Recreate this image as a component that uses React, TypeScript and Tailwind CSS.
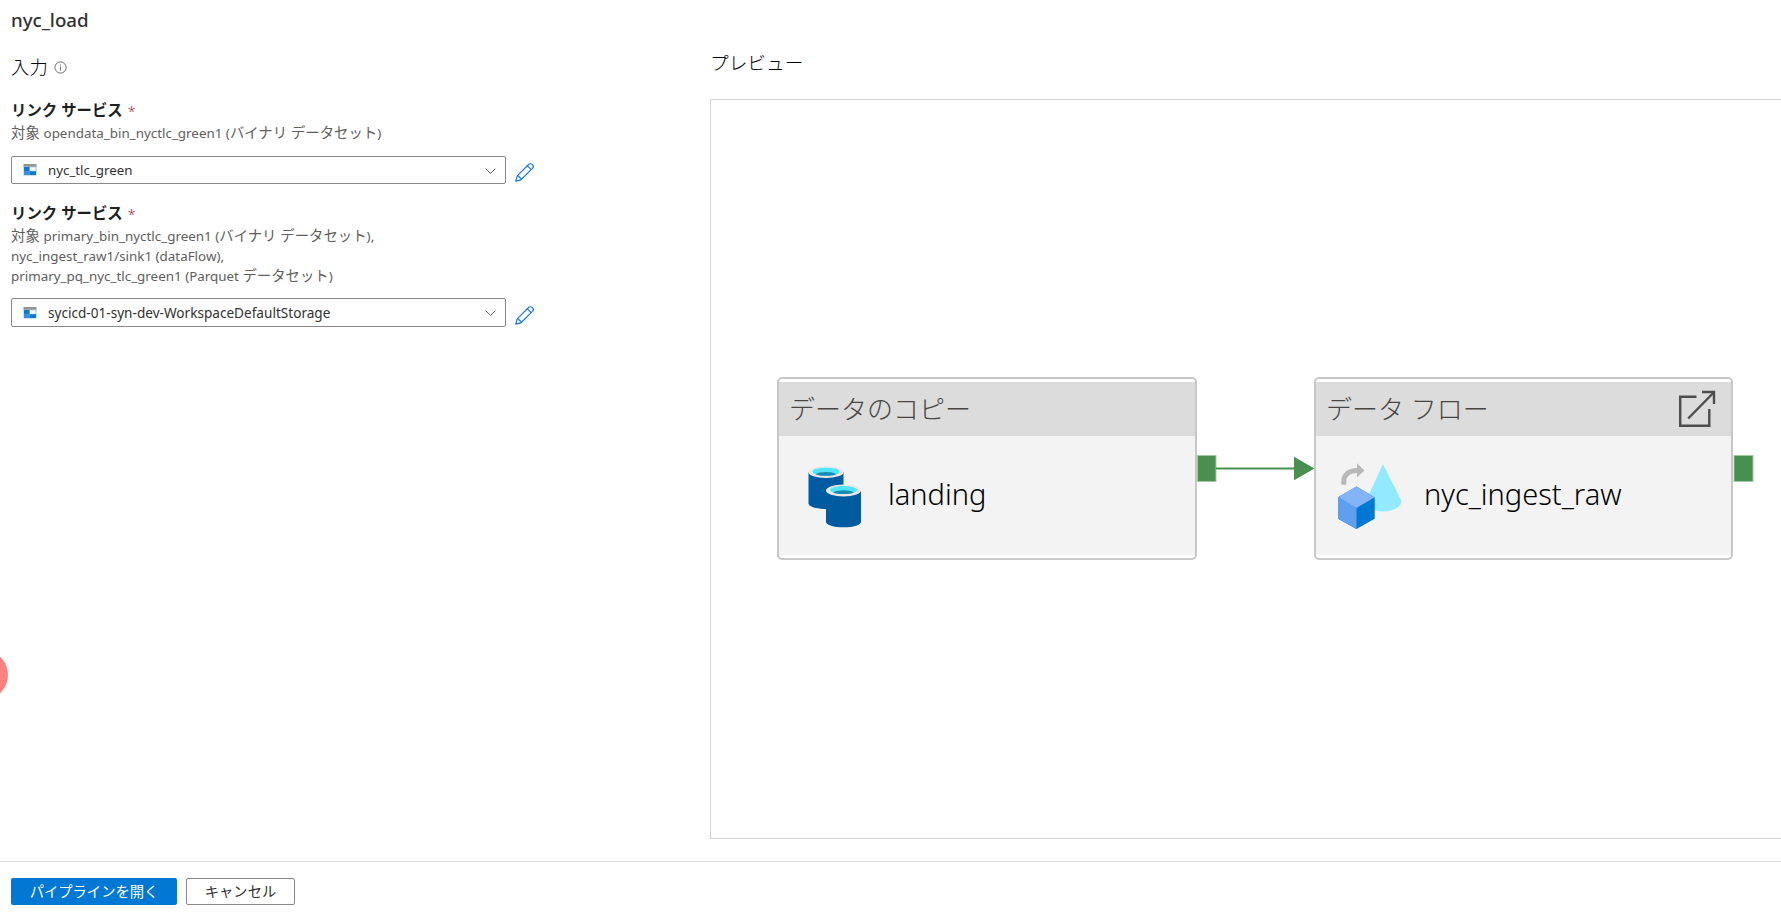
import { ReactNode } from "react";

function InfoIcon() {
  return (
    <svg width="13" height="13" viewBox="0 0 13 13" fill="none" className="block">
      <circle cx="6.5" cy="6.5" r="5.6" stroke="#605e5c" strokeWidth="0.9" />
      <path d="M6.5 5.6V9.6" stroke="#605e5c" strokeWidth="0.9" />
      <path d="M6.5 3.5V4.5" stroke="#605e5c" strokeWidth="1" />
    </svg>
  );
}

function ServiceIcon() {
  return (
    <svg width="14" height="12" viewBox="0 0 14 12" className="block shrink-0">
      <rect x="0.5" y="0" width="13" height="3" fill="#949494" />
      <rect x="0.5" y="2.6" width="13" height="8.9" fill="#a9c6e0" />
      <rect x="1" y="3" width="5.4" height="4.2" fill="#0f78d0" />
      <rect x="1" y="7.2" width="5.6" height="3.8" fill="#2f8fe0" />
      <rect x="6.6" y="7.2" width="6.4" height="3.8" fill="#0f78d0" />
      <rect x="7" y="3.4" width="5.4" height="3.4" fill="#ffffff" />
    </svg>
  );
}

function Chevron() {
  return (
    <svg width="11" height="7" viewBox="0 0 11 7" fill="none" className="relative top-px block shrink-0">
      <path d="M0.7 0.7L5.5 5.4L10.3 0.7" stroke="#605e5c" strokeWidth="1" />
    </svg>
  );
}

function Pencil() {
  return (
    <svg width="19" height="19" viewBox="0 0 19 19" fill="none" stroke="#1a7ad9" strokeWidth="1.2" strokeLinejoin="round" className="block shrink-0">
      <path d="M0.8 18.2L2.2 12.9L13.6 1.5C14.6 0.5 16.4 0.5 17.4 1.6C18.5 2.6 18.5 4.3 17.5 5.4L6 16.8Z" />
      <path d="M12.3 2.8L16.2 6.7M2.2 12.9C3.9 12.9 4.4 13.2 4.3 14.7C5.8 14.6 6.1 15.1 6 16.8M1.2 16.7L2.3 17.8" />
    </svg>
  );
}

function CopyIcon() {
  return (
    <svg width="54" height="62" viewBox="0 0 54 62" className="block">
      <path d="M0.5 6V37.5C0.5 40.5 8.3 43 18 43S35.5 40.5 35.5 37.5V6Z" fill="#005ba1" />
      <ellipse cx="18" cy="6.2" rx="17.5" ry="5.9" fill="#e8e8e8" />
      <ellipse cx="18" cy="5.7" rx="13.5" ry="4" fill="#50e6ff" />
      <path d="M7.5 8.2C10 6.6 14 5.9 18 5.9S26 6.6 28.5 8.2C26 9.3 22.5 9.8 18 9.8S10 9.3 7.5 8.2Z" fill="#198ab3" />
      <path d="M18 24.5V56C18 59 25.8 61.3 35.5 61.3S53 59 53 56V24.5Z" fill="#005ba1" />
      <ellipse cx="35.5" cy="24.5" rx="17.5" ry="5.9" fill="#e8e8e8" />
      <ellipse cx="35.5" cy="24" rx="13.5" ry="4" fill="#50e6ff" />
      <path d="M25 26.5C27.5 24.9 31.5 24.2 35.5 24.2S43.5 24.9 46 26.5C43.5 27.6 40 28.1 35.5 28.1S27.5 27.6 25 26.5Z" fill="#198ab3" />
    </svg>
  );
}

function FlowIcon() {
  return (
    <svg width="66" height="68" viewBox="0 0 66 68" className="block">
      <path d="M46 2L64.3 38.5C65 45 56 49.5 46 49.5C37 49.5 28 46 29 39Z" fill="#93e9ff" />
      <path d="M4.3 22.7V19.5C4.3 11 11 6 20 6V1.3L27.4 8.6L20 15.5V11C13.5 11 9.3 14 9.3 19.5V22.7Z" fill="#b8b8b8" />
      <path d="M19.5 24.5L37.7 35.2V56.7L19.5 67L1 56.7V35.2Z" fill="#0078d4" />
      <path d="M1 35.2L19.5 45.9V67L1 56.7Z" fill="#5e9fee" />
      <path d="M19.5 24.5L37.7 35.2L19.5 45.9L1 35.2Z" fill="#83b4f7" />
    </svg>
  );
}

function OpenIcon() {
  return (
    <svg width="38" height="38" viewBox="0 0 38 38" fill="none" stroke="#4d4d4d" strokeWidth="2.4" className="block">
      <path d="M18.5 6.8H2.2V35.8H31.3V19" />
      <path d="M10.2 28.5L35.7 2.5" />
      <path d="M24 2H36V14" />
    </svg>
  );
}

function ServiceField({ label, value, valueClass, boxClass, pencilClass, gap, children }: { label: ReactNode; value: string; valueClass: string; boxClass: string; pencilClass: string; gap: string; children: ReactNode }) {
  return (
    <div>
      <div className="flex h-5 items-center text-[15.4px] font-bold whitespace-pre text-[#201f1e]">
        <span>{label}</span>
        <span className="ml-[5px] text-[14px] font-light text-[#a4262c]">*</span>
      </div>
      <div className="mt-[2px] text-[14.4px] leading-5 whitespace-pre text-[#605e5c]">{children}</div>
      <div className={"flex " + gap}>
        <div className={"flex w-[495px] items-center rounded-[2px] border border-[#8a8886] pr-[9px] pl-[11px] " + boxClass}>
          <ServiceIcon />
          <span className={"ml-[11px] flex-1 pt-px whitespace-pre text-[#323130] " + valueClass}>{value}</span>
          <Chevron />
        </div>
        <div className={"ml-[9px] " + pencilClass}><Pencil /></div>
      </div>
    </div>
  );
}

function Node({ title, name, nameClass, icon, action, className }: { title: string; name: string; nameClass: string; icon: ReactNode; action?: ReactNode; className: string }) {
  return (
    <div className={"absolute top-[277px] flex h-[183px] flex-col rounded-[5px] border-2 border-[#c8c8c8] bg-white py-[3px] " + className}>
      <div className="flex h-[54px] shrink-0 items-center justify-between bg-[#dcdcdc] pr-[15px] pl-[10px]">
        <span className="text-[26px] font-light whitespace-pre text-[#484644]">{title}</span>
        {action}
      </div>
      <div className="flex flex-1 bg-[#f3f3f3]">
        {icon}
        <span className={"mt-[36px] leading-[44px] font-[350] whitespace-pre text-black " + nameClass}>{name}</span>
      </div>
    </div>
  );
}

export default function App() {
  return (
    <div className="relative flex h-[915px] w-[1781px] flex-col overflow-hidden bg-white font-['Noto_Sans','Noto_Sans_CJK_JP',sans-serif]">
      <div className="flex h-[861px] shrink-0">
        <section className="w-[710px] shrink-0 pl-[11px]">
          <h1 className="pt-[5px] text-[18.7px] leading-[30px] font-medium text-[#323130]">nyc_load</h1>
          <div className="mt-[19px] flex h-[26px] items-center text-[18.4px] font-light text-black">
            <span>入力</span>
            <span className="ml-[6px]"><InfoIcon /></span>
          </div>
          <div className="mt-[21px]">
            <ServiceField label="リンク サービス" value="nyc_tlc_green" valueClass="text-[13.3px]" boxClass="h-[28px]" pencilClass="mt-[7px]" gap="mt-[13px]">
              <div>対象 <span className="text-[13.4px]">opendata_bin_nyctlc_green1 (</span>バイナリ データセット<span className="text-[13.4px]">)</span></div>
            </ServiceField>
          </div>
          <div className="mt-[20px]">
            <ServiceField label="リンク サービス" value="sycicd-01-syn-dev-WorkspaceDefaultStorage" valueClass="text-[13.6px]" boxClass="h-[29px]" pencilClass="mt-[8px]" gap="mt-[12px]">
              <div>対象 <span className="text-[13.4px]">primary_bin_nyctlc_green1 (</span>バイナリ データセット<span className="text-[13.4px]">),</span></div>
              <div className="text-[13.4px] leading-5">nyc_ingest_raw1/sink1 (dataFlow),</div>
              <div><span className="text-[13.4px]">primary_pq_nyc_tlc_green1 (Parquet </span>データセット<span className="text-[13.4px]">)</span></div>
            </ServiceField>
          </div>
        </section>
        <section className="flex flex-1 flex-col">
          <h2 className="pt-[49px] text-[18.7px] leading-[28px] font-light text-black">プレビュー</h2>
          <div className="relative mt-[22px] h-[740px] border-y border-l border-[#d2d2d2]">
            <Node className="left-[66px] w-[420px]" title="データのコピー" name="landing" nameClass="ml-[26px] text-[29px]" icon={<div className="mt-[30px] ml-[29px]"><CopyIcon /></div>} />
            <Node className="left-[603px] w-[419px]" title="データ フロー" name="nyc_ingest_raw" nameClass="ml-[21px] text-[29px]" icon={<div className="mt-[26px] ml-[21px]"><FlowIcon /></div>} action={<OpenIcon />} />
            <svg width="560" height="30" viewBox="0 0 560 30" className="absolute top-[353px] left-[485px]">
              <rect x="1.5" y="2.5" width="18.5" height="26" fill="#488f50" stroke="#a3cba8" />
              <path d="M20 15.4H98" stroke="#488f50" strokeWidth="2" />
              <path d="M98 3.7L118.5 15.4L98 27.200Z" fill="#488f50" />
              <rect x="538" y="2.5" width="19" height="26" fill="#488f50" stroke="#a3cba8" />
            </svg>
          </div>
        </section>
      </div>
      <footer className="flex h-[54px] gap-[9px] border-t border-[#dcdcdc] pt-4 pl-[11px] text-[14.3px]">
        <button className="h-[27px] w-[166px] rounded-[2px] bg-[#0078d4] leading-[24px] text-white">パイプラインを開く</button>
        <button className="h-[27px] w-[109px] rounded-[2px] border border-[#8a8886] leading-[22px] text-[#323130]">キャンセル</button>
      </footer>
      <div className="absolute top-[650px] -left-[42px] size-[50px] rounded-full bg-[#ff8080]" />
    </div>
  );
}
